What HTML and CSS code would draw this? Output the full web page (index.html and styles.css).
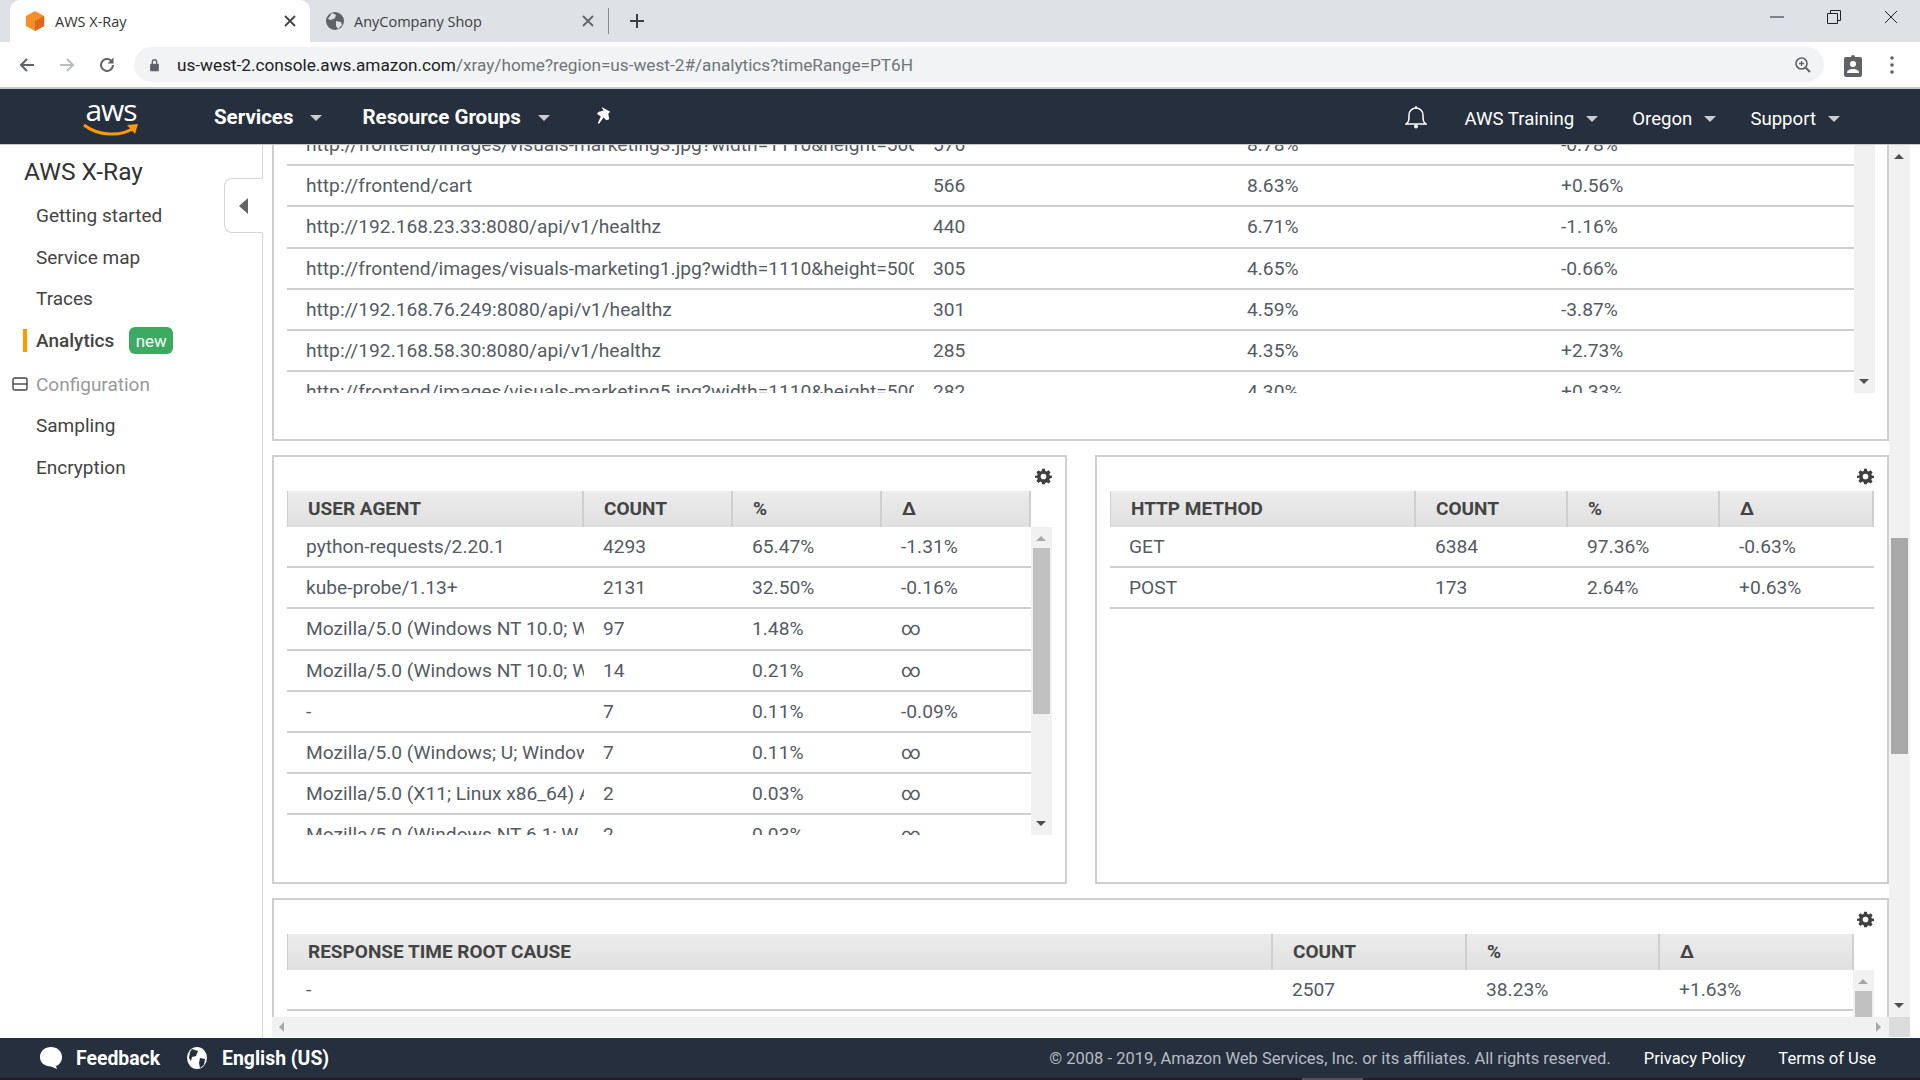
FILE: index.html
```html
<!DOCTYPE html>
<html lang="en">
<head>
<meta charset="UTF-8">
<title>AWS X-Ray</title>
<link rel="stylesheet" href="styles.css">
</head>
<body>

<div class="tabstrip">
  <div class="tab tab-active">
    <svg class="tab-icon" viewBox="0 0 22 24"><path d="M11 1l10 5.500v11L11 23 1 17.500v-11z" fill="#f58f29"/><path d="M11 12l10-5.500v11L11 23z" fill="#e0661b"/></svg>
    <span class="tab-title">AWS X-Ray</span>
    <svg class="tab-close" viewBox="0 0 12 12"><path d="M1 1l10 10M11 1L1 11" stroke="#444" stroke-width="1.800"/></svg>
  </div>
  <div class="tab tab-second">
    <svg class="tab-icon tab-icon-globe" viewBox="0 0 20 20"><circle cx="10" cy="10" r="9" fill="#5f6368"/><path d="M7 2l4 2-1 3-4 2-3-1zM11 10l5 1 1 3-4 4-2-3z" fill="#dee1e6"/></svg>
    <span class="tab-title">AnyCompany Shop</span>
    <svg class="tab-close" viewBox="0 0 12 12"><path d="M1 1l10 10M11 1L1 11" stroke="#666" stroke-width="1.800"/></svg>
  </div>
  <span class="tab-sep"></span>
  <svg class="new-tab" viewBox="0 0 16 16"><path d="M8 1v14M1 8h14" stroke="#3c4043" stroke-width="2"/></svg>
  <div class="win-btns">
    <svg viewBox="0 0 14 14"><path d="M0 7h14" stroke="#222" fill="none"/></svg>
    <svg viewBox="0 0 14 14"><path d="M.500 3.500h10v10H.500zM3.500 3.500v-3h10v10h-3" stroke="#222" fill="none"/></svg>
    <svg viewBox="0 0 14 14"><path d="M1 1l12 12M13 1L1 13" stroke="#222" fill="none"/></svg>
  </div>
</div>

<div class="toolbar">
  <svg class="tool-icon" viewBox="0 0 18 18"><path d="M16 9H3M9 3L3 9l6 6" stroke="#5f6368" stroke-width="2" fill="none"/></svg>
  <svg class="tool-icon" viewBox="0 0 18 18"><path d="M2 9h13M9 3l6 6-6 6" stroke="#b9bcc0" stroke-width="2" fill="none"/></svg>
  <svg class="tool-icon" viewBox="0 0 18 18"><path d="M15 9a6 6 0 1 1-2-4.500" stroke="#5f6368" stroke-width="2" fill="none"/><path d="M15.500 1.500v6h-6z" fill="#5f6368"/></svg>
  <div class="omnibox">
    <svg class="lock" viewBox="0 0 12 16"><path d="M3.500 7V4.500a2.500 2.500 0 0 1 5 0V7" stroke="#5f6368" stroke-width="1.500" fill="none"/><rect x="1" y="6.500" width="10" height="8.500" rx="1" fill="#5f6368"/></svg>
    <span class="url">us-west-2.console.aws.amazon.com<span class="url-path">/xray/home?region=us-west-2#/analytics?timeRange=PT6H</span></span>
    <svg class="zoom-icon" viewBox="0 0 18 18"><circle cx="7.500" cy="7.500" r="5.500" stroke="#5f6368" stroke-width="1.600" fill="none"/><path d="M11.500 11.500L16 16" stroke="#5f6368" stroke-width="2"/><path d="M7.500 5v5M5 7.500h5" stroke="#5f6368" stroke-width="1.300"/></svg>
  </div>
  <svg class="badge-icon" viewBox="0 0 18 24"><path d="M2 4h5a2 2 0 0 1 4 0h5a2 2 0 0 1 2 2v16a2 2 0 0 1-2 2H2a2 2 0 0 1-2-2V6a2 2 0 0 1 2-2z" fill="#5f6368"/><circle cx="9" cy="11" r="3" fill="#fff"/><path d="M3 20c0-3 3-4 6-4s6 1 6 4z" fill="#fff"/></svg>
  <svg class="dots" viewBox="0 0 4 18"><circle cx="2" cy="2" r="1.800" fill="#5f6368"/><circle cx="2" cy="9" r="1.800" fill="#5f6368"/><circle cx="2" cy="16" r="1.800" fill="#5f6368"/></svg>
</div>

<nav class="topnav">
  <div class="aws-logo">
    <span class="aws-word">aws</span>
    <svg class="aws-smile" viewBox="0 0 56 16"><path d="M1 3c14 11 36 12 50 3" stroke="#f90" stroke-width="3" fill="none"/><path d="M44 3l11-1-3 10z" fill="#f90"/></svg>
  </div>
  <a class="nav-main nav-services">Services<i class="caret"></i></a>
  <a class="nav-main nav-groups">Resource Groups<i class="caret"></i></a>
  <svg class="pin" viewBox="0 0 18 20"><path d="M6 0l9 5-2 2 1 6-3 1-3-3-5 7-1-1 3-7-4-3 2-2 5-1z" fill="#fff"/></svg>
  <div class="nav-right">
    <svg class="bell" viewBox="0 0 22 24"><path d="M1 19c3-2 3-4 3-9a7 7 0 0 1 14 0c0 5 0 7 3 9z" stroke="#fff" stroke-width="1.500" fill="none"/><path d="M11 3V1" stroke="#fff" stroke-width="1.500"/><circle cx="11" cy="21.500" r="2" fill="#fff"/></svg>
    <a class="nav-sub nav-training">AWS Training<i class="caret"></i></a>
    <a class="nav-sub nav-oregon">Oregon<i class="caret"></i></a>
    <a class="nav-sub">Support<i class="caret"></i></a>
  </div>
</nav>

<div class="body-row">
  <aside class="sidebar">
    <h1 class="side-title">AWS X-Ray</h1>
    <ul class="side-list">
      <li>Getting started</li>
      <li>Service map</li>
      <li>Traces</li>
      <li class="active"><b>Analytics</b><span class="new">new</span></li>
      <li class="section"><svg class="minus" viewBox="0 0 16 14"><rect x="1" y="1" width="14" height="12" rx="2" stroke="#444" fill="none" stroke-width="1.400"/><path d="M1 7h14" stroke="#444" stroke-width="1.400"/></svg>Configuration</li>
      <li>Sampling</li>
      <li>Encryption</li>
    </ul>
    <div class="collapse"><i></i></div>
  </aside>

  <main class="viewport">
    <div class="viewport-top">
      <div class="content">

        <section class="panel panel-url">
          <div class="scroll-box scroll-url">
            <div class="rows">
              <div class="row cols-url"><span>http://frontend/images/visuals-marketing3.jpg?width=1110&amp;height=500</span><span>576</span><span>8.78%</span><span>-0.78%</span></div>
              <div class="row cols-url"><span>http://frontend/cart</span><span>566</span><span>8.63%</span><span>+0.56%</span></div>
              <div class="row cols-url"><span>http://192.168.23.33:8080/api/v1/healthz</span><span>440</span><span>6.71%</span><span>-1.16%</span></div>
              <div class="row cols-url"><span>http://frontend/images/visuals-marketing1.jpg?width=1110&amp;height=500</span><span>305</span><span>4.65%</span><span>-0.66%</span></div>
              <div class="row cols-url"><span>http://192.168.76.249:8080/api/v1/healthz</span><span>301</span><span>4.59%</span><span>-3.87%</span></div>
              <div class="row cols-url"><span>http://192.168.58.30:8080/api/v1/healthz</span><span>285</span><span>4.35%</span><span>+2.73%</span></div>
              <div class="row cols-url"><span>http://frontend/images/visuals-marketing5.jpg?width=1110&amp;height=500</span><span>282</span><span>4.30%</span><span>+0.33%</span></div>
            </div>
            <div class="vbar"><i class="up up-none"></i><i class="down"></i></div>
          </div>
        </section>

        <div class="panel-pair">
          <section class="panel panel-half panel-agent">
            <svg class="gear" viewBox="0 0 24 24"><use href="#gear"/></svg>
            <div class="thead cols-agent"><span>USER AGENT</span><span>COUNT</span><span>%</span><span>&Delta;</span></div>
            <div class="scroll-box scroll-agent">
              <div class="rows">
                <div class="row cols-agent"><span>python-requests/2.20.1</span><span>4293</span><span>65.47%</span><span>-1.31%</span></div>
                <div class="row cols-agent"><span>kube-probe/1.13+</span><span>2131</span><span>32.50%</span><span>-0.16%</span></div>
                <div class="row cols-agent"><span>Mozilla/5.0 (Windows NT 10.0; W</span><span>97</span><span>1.48%</span><span>&infin;</span></div>
                <div class="row cols-agent"><span>Mozilla/5.0 (Windows NT 10.0; W</span><span>14</span><span>0.21%</span><span>&infin;</span></div>
                <div class="row cols-agent"><span>-</span><span>7</span><span>0.11%</span><span>-0.09%</span></div>
                <div class="row cols-agent"><span>Mozilla/5.0 (Windows; U; Window</span><span>7</span><span>0.11%</span><span>&infin;</span></div>
                <div class="row cols-agent"><span>Mozilla/5.0 (X11; Linux x86_64) A</span><span>2</span><span>0.03%</span><span>&infin;</span></div>
                <div class="row cols-agent"><span>Mozilla/5.0 (Windows NT 6.1; W</span><span>2</span><span>0.03%</span><span>&infin;</span></div>
              </div>
              <div class="vbar"><i class="up"></i><b class="thumb thumb-agent"></b><i class="down"></i></div>
            </div>
          </section>

          <section class="panel panel-half panel-method">
            <svg class="gear" viewBox="0 0 24 24"><use href="#gear"/></svg>
            <div class="thead cols-method"><span>HTTP METHOD</span><span>COUNT</span><span>%</span><span>&Delta;</span></div>
            <div class="rows">
              <div class="row cols-method"><span>GET</span><span>6384</span><span>97.36%</span><span>-0.63%</span></div>
              <div class="row cols-method"><span>POST</span><span>173</span><span>2.64%</span><span>+0.63%</span></div>
            </div>
          </section>
        </div>

        <section class="panel panel-cause">
          <svg class="gear" viewBox="0 0 24 24"><use href="#gear"/></svg>
          <div class="thead cols-cause thead-cause"><span>RESPONSE TIME ROOT CAUSE</span><span>COUNT</span><span>%</span><span>&Delta;</span></div>
          <div class="scroll-box scroll-cause">
            <div class="rows">
              <div class="row cols-cause"><span>-</span><span>2507</span><span>38.23%</span><span>+1.63%</span></div>
            </div>
            <div class="vbar"><i class="up"></i><b class="thumb thumb-cause"></b></div>
          </div>
        </section>

      </div>
      <div class="vbar page-bar"><i class="up up-dark"></i><b class="thumb thumb-page"></b><i class="down"></i></div>
    </div>
    <div class="hbar"><i class="left"></i><i class="right"></i><span class="corner"></span></div>
  </main>
</div>

<footer class="footer">
  <svg class="foot-icon" viewBox="0 0 24 24"><path d="M12 1c6 0 11 4 11 10 0 5-3 8-6 9l1 3-6-2.500C6 20.500 1 17 1 11 1 5 6 1 12 1z" fill="#fff"/></svg>
  <span class="foot-link foot-feedback">Feedback</span>
  <svg class="foot-icon foot-globe" viewBox="0 0 22 24"><ellipse cx="11" cy="12" rx="10" ry="11" fill="#fff"/><path d="M6 3l6 2-2 5-4 1-1 4-2-3 1-6zM14 12l5 1-1 6-4 3-1-5z" fill="#232f3e"/></svg>
  <span class="foot-link">English (US)</span>
  <span class="copyright">&copy; 2008 - 2019, Amazon Web Services, Inc. or its affiliates. All rights reserved.</span>
  <span class="foot-legal">Privacy Policy</span>
  <span class="foot-legal">Terms of Use</span>
</footer>
<div class="window-edge"></div>

<svg class="defs" width="0" height="0">
  <symbol id="gear" viewBox="0 0 24 24"><path fill-rule="evenodd" fill="#3f3f3f" d="M10 1h4l.6 3.200 1.900.8L19.200 3.200 22 6l-1.800 2.700.8 1.900L24 11v3l-3 .6-.8 1.900 1.800 2.700-2.800 2.800-2.700-1.800-1.900.8L14 23h-4l-.6-3-1.900-.8-2.700 1.800L2 18.200l1.800-2.700L3 13.600 0 14v-3l3-.4.800-1.900L2 6l2.800-2.800L7.500 5l1.900-.8zM12 8a4 4 0 1 0 0 8 4 4 0 0 0 0-8z"/></symbol>
</svg>

</body>
</html>
```

FILE: styles.css
```css
* {
  box-sizing: border-box;
}

html, body {
  margin: 0;
  height: 1080px;
  overflow: hidden;
}

body {
  font-family: Roboto, sans-serif;
  font-size: 19.2px;
  color: #444;
  background: #1f1f1f;
  display: flex;
  flex-direction: column;
}

.defs {
  position: absolute;
}

/* browser chrome */
.tabstrip {
  height: 42px;
  background: #dee1e6;
  display: flex;
  align-items: flex-end;
  flex: none;
}

.tab {
  width: 298px;
  height: 42px;
  display: flex;
  align-items: center;
  padding-left: 15px;
  font-family: "Open Sans", sans-serif;
  font-size: 14.5px;
  color: #3c4043;
}

.tab-active {
  width: 300px;
  margin-left: 10px;
  padding-left: 14px;
  background: #fff;
  border-radius: 10px 10px 0 0;
  color: #333;
}

.tab-icon {
  width: 22px;
  height: 22px;
  flex: none;
}

.tab-icon-globe {
  width: 20px;
  height: 20px;
}

.tab-title {
  margin-left: 9px;
  flex: 1;
}

.tab-close {
  width: 12px;
  height: 12px;
  margin-right: 14px;
  flex: none;
}

.tab-sep {
  width: 1px;
  height: 26px;
  background: #8a8d91;
  margin-bottom: 8px;
}

.new-tab {
  width: 16px;
  height: 16px;
  margin: 0 0 13px 20px;
}

.win-btns {
  margin-left: auto;
  height: 42px;
  display: flex;
  align-items: center;
  gap: 43px;
  padding: 0 22px 8px 0;
}

.win-btns svg {
  width: 14px;
  height: 14px;
}

.toolbar {
  height: 47px;
  flex: none;
  display: flex;
  align-items: center;
  background: #fff;
  border-bottom: 2px solid #c8c8c8;
  padding: 0 0 0 18px;
}

.tool-icon {
  width: 18px;
  height: 18px;
  margin-right: 22px;
}

.omnibox {
  width: 1690px;
  height: 35px;
  margin-left: -4px;
  background: #f1f3f4;
  border-radius: 18px;
  display: flex;
  align-items: center;
  padding: 0 12px 0 15px;
}

.lock {
  width: 11px;
  height: 14px;
}

.url {
  margin-left: 17px;
  font-size: 17.2px;
  color: #202124;
  flex: 1;
}

.url-path {
  color: #70757a;
}

.zoom-icon {
  width: 18px;
  height: 18px;
}

.badge-icon {
  width: 18px;
  height: 24px;
  margin-left: 20px;
}

.dots {
  width: 4px;
  height: 18px;
  margin-left: 28px;
}

/* aws nav */
.topnav {
  height: 55px;
  flex: none;
  background: #252f3e;
  display: flex;
  align-items: center;
  color: #fff;
}

.aws-logo {
  width: 56px;
  height: 42px;
  margin-left: 83px;
  position: relative;
  flex: none;
}

.aws-word {
  display: block;
  text-align: center;
  font-family: "Open Sans", sans-serif;
  font-size: 30px;
  line-height: 27px;
  letter-spacing: -1px;
}

.aws-smile {
  position: absolute;
  left: 0;
  top: 26px;
  width: 56px;
  height: 16px;
}

.nav-main {
  font-size: 20.5px;
  font-weight: 700;
  display: flex;
  align-items: center;
}

.nav-services {
  margin-left: 75px;
}

.nav-groups {
  margin-left: 40px;
}

.caret {
  display: inline-block;
  width: 0;
  height: 0;
  border-left: 6px solid transparent;
  border-right: 6px solid transparent;
  border-top: 6px solid #ccc;
  margin-left: 17px;
  margin-top: 3px;
}

.pin {
  width: 17px;
  height: 19px;
  margin: -1px 0 0 46px;
}

.nav-right {
  margin-left: auto;
  display: flex;
  align-items: center;
  padding-right: 80px;
}

.bell {
  width: 22px;
  height: 24px;
  margin-right: 38px;
}

.nav-sub {
  font-size: 18.6px;
  display: flex;
  align-items: center;
  margin-top: 5px;
}

.nav-sub .caret {
  margin-left: 12px;
  margin-top: 0;
}

.nav-training {
  margin-right: 34px;
}

.nav-oregon {
  margin-right: 34px;
}

/* body */
.body-row {
  height: 894px;
  flex: none;
  display: flex;
  border-top: 1px solid #c8c8c8;
  background: #fff;
}

.sidebar {
  width: 263px;
  flex: none;
  border-right: 1px solid #d5d5d5;
  position: relative;
  padding: 10px 0 0 24px;
}

.side-title {
  margin: 0;
  font-size: 24.5px;
  font-weight: 400;
  line-height: 34px;
  color: #333;
}

.side-list {
  list-style: none;
  margin: 6px 0 0;
  padding: 0 0 0 12px;
}

.side-list li {
  height: 41.600px;
  display: flex;
  align-items: center;
  position: relative;
  font-size: 19px;
  color: #444;
}

.side-list .active::before {
  content: "";
  position: absolute;
  left: -13px;
  top: 9px;
  width: 4px;
  height: 23px;
  background: #f90;
}

.side-list b {
  font-weight: 500;
}

.new {
  margin-left: 15px;
  width: 44px;
  height: 27px;
  border-radius: 6px;
  background: #3cab61;
  color: #fff;
  font-size: 17px;
  text-align: center;
  line-height: 28px;
}

.side-list .section {
  color: #999;
  margin-top: 2px;
}

.minus {
  position: absolute;
  left: -24px;
  width: 16px;
  height: 14px;
}

.collapse {
  position: absolute;
  right: -1px;
  top: 33px;
  width: 39px;
  height: 55px;
  background: #fff;
  border: 1px solid #d5d5d5;
  border-right: 1px solid #fff;
  border-radius: 8px 0 0 8px;
  display: flex;
  align-items: center;
  justify-content: center;
}

.collapse i {
  border-top: 8px solid transparent;
  border-bottom: 8px solid transparent;
  border-right: 9px solid #666;
}

/* scrolled area */
.viewport {
  width: 1648px;
  margin-left: 9px;
  display: flex;
  flex-direction: column;
  height: 893px;
  flex: none;
}

.viewport-top {
  height: 872px;
  display: flex;
  overflow: hidden;
}

.content {
  width: 1617px;
  flex: none;
  display: flex;
  flex-direction: column;
}

.page-bar {
  width: 21px;
  flex: none;
}

.panel {
  border: 2px solid #cfcfcf;
  background: #fff;
  position: relative;
  flex: none;
}

.panel-url {
  height: 296px;
  border-top: 0;
  padding: 0 14px 0 13px;
}

.panel-pair {
  display: flex;
  justify-content: space-between;
  margin-top: 14px;
}

.panel-half {
  height: 429px;
  padding: 34px 13px 0;
}

.panel-agent {
  width: 795px;
}

.panel-method {
  width: 794px;
}

.panel-cause {
  margin-top: 14px;
  height: 200px;
  padding: 34px 13px 0;
  border-bottom: 0;
}

.gear {
  position: absolute;
  right: 13px;
  top: 11px;
  width: 17px;
  height: 17px;
}

.thead {
  height: 36px;
  background: linear-gradient(#ececec, #e0e0e0);
  font-size: 19px;
  font-weight: 700;
  color: #444;
  display: grid;
  align-items: center;
}

.thead span {
  height: 36px;
  line-height: 35px;
  padding-left: 20px;
  border-right: 2px solid #cfcfcf;
}

.thead span:first-child {
  border-left: 1px solid #cfcfcf;
}

.thead-cause {
  width: 1567px;
}

.scroll-box {
  display: flex;
  overflow: hidden;
}

.scroll-url {
  height: 248px;
  width: 1588px;
}

.scroll-agent {
  height: 308px;
}

.scroll-cause {
  height: 47px;
}

.rows {
  flex: 1;
  min-width: 0;
}

.scroll-url .rows {
  margin-top: -20px;
}

.row {
  height: 41.200px;
  display: grid;
  align-items: center;
  border-bottom: 2px solid #cfcfcf;
  font-size: 19.200px;
  color: #545b64;
}

.row span {
  white-space: nowrap;
  overflow: hidden;
  padding-left: 19px;
}

.cols-url {
  grid-template-columns: 627px 314px 314px 1fr;
}

.cols-agent {
  grid-template-columns: 297px 149px 149px 149px;
}

.thead.cols-agent {
  width: 744px;
}

.cols-method {
  grid-template-columns: 306px 152px 152px 1fr;
}

.cols-cause {
  grid-template-columns: 986px 194px 193px 1fr;
}

.vbar {
  width: 21px;
  flex: none;
  background: #f1f1f1;
  position: relative;
}

.vbar i {
  position: absolute;
  left: 5px;
  width: 0;
  height: 0;
  border-left: 5px solid transparent;
  border-right: 5px solid transparent;
}

.vbar .up {
  top: 9px;
  border-bottom: 5px solid #a8a8a8;
}

.vbar .up-none {
  display: none;
}

.vbar .up-dark {
  border-bottom-color: #505050;
}

.vbar .down {
  bottom: 9px;
  border-top: 5px solid #505050;
}

.thumb {
  position: absolute;
  left: 2px;
  right: 2px;
  background: #c1c1c1;
}

.thumb-agent {
  top: 21px;
  height: 166px;
}

.thumb-cause {
  top: 21px;
  height: 30px;
}

.thumb-page {
  top: 393px;
  height: 216px;
  background: #a8a8a8;
}

.hbar {
  height: 20px;
  width: 1638px;
  background: #f1f1f1;
  position: relative;
}

.hbar i {
  position: absolute;
  top: 5px;
  width: 0;
  height: 0;
  border-top: 5px solid transparent;
  border-bottom: 5px solid transparent;
}

.hbar .left {
  left: 7px;
  border-right: 5px solid #a8a8a8;
}

.hbar .right {
  right: 29px;
  border-left: 5px solid #a8a8a8;
}

.corner {
  position: absolute;
  right: 0;
  top: 0;
  width: 21px;
  height: 20px;
  background: #dcdcdc;
}

/* footer */
.footer {
  height: 40px;
  flex: none;
  background: #252f3e;
  color: #fff;
  display: flex;
  align-items: center;
  padding: 0 44px 0 39px;
}

.foot-icon {
  width: 24px;
  height: 24px;
}

.foot-globe {
  margin-left: 2px;
}

.foot-link {
  font-size: 19.4px;
  font-weight: 700;
  margin-left: 13px;
}

.foot-feedback {
  margin-right: 23px;
}

.copyright {
  margin-left: auto;
  font-size: 16.5px;
  color: #b8bcc2;
}

.foot-legal {
  font-size: 16.5px;
  margin-left: 33px;
}

.window-edge {
  width: 61px;
  height: 2px;
  margin-left: 1302px;
  background: #555;
}
```
